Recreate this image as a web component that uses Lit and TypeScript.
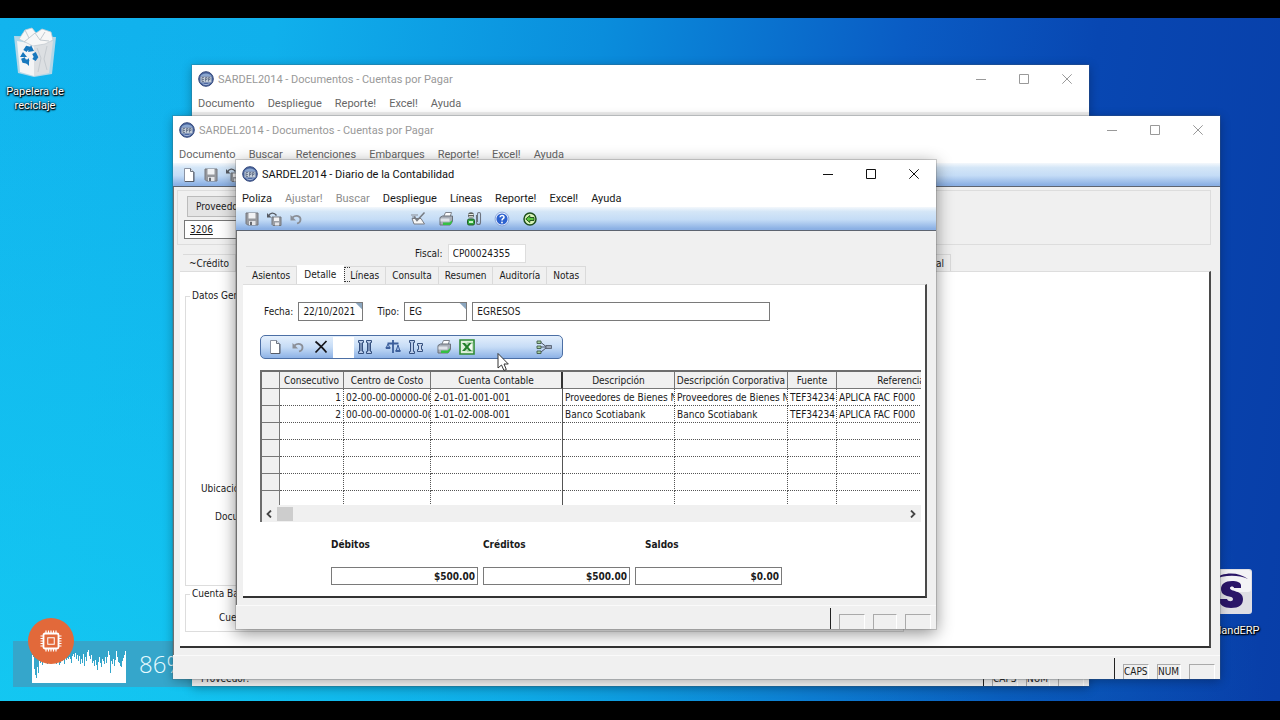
import { LitElement, html, css, svg } from "lit";
import { customElement, property } from "lit/decorators.js";

const ICONS: Record<string, unknown> = {
  page: svg`<path d="M3.5 1.5h6l3 3v10h-9z" fill="#fff" stroke="#8b93a3"/><path d="M9.500 1.500v3h3" fill="#dfe5ee" stroke="#6d7480"/><path d="M4 14.500h9V5" fill="none" stroke="#565c68"/>`,
  save: svg`<path d="M2 2h12v12H3.500L2 12.500z" fill="#97999e" stroke="#74777d"/><path d="M4.500 2h7v5.500h-7z" fill="#f1f2f4"/><path d="M5 10h6.500v4H5z" fill="#e4e5e8"/><path d="M6 10.800h2V14H6z" fill="#65686e"/>`,
  saveas: svg`<path d="M6 6h9v8.500H7L6 13.500z" fill="#9b9ea4" stroke="#73767c"/><path d="M8 6.500h5v3.500H8z" fill="#f3f3f5"/><path d="M9 11.500h4v3H9z" fill="#e3e4e8"/><path d="M2.500 5C4 1.500 8 1 10.500 4.500" fill="none" stroke="#555a62" stroke-width="1.400"/><path d="M1 2v4.500h4.500z" fill="#555a62"/>`,
  undo: svg`<path d="M4.500 6.500C8 3.500 13 5 12.500 9c-.2 2-1.500 3-3.500 3.500" fill="none" stroke="#8b8f97" stroke-width="1.800"/><path d="M2.500 4v5.500H8z" fill="#8b8f97"/>`,
  check: svg`<path d="M2 7.500h9l3.500 5.500H4z" fill="#f6f6f6" stroke="#787c84"/><path d="M1 4h7M2 6h4" stroke="#8b8f97"/><path d="M4 5.500l3 4L14.500 1.500" fill="none" stroke="#777b82" stroke-width="1.500"/>`,
  print: svg`<path d="M5.500 6L7.500 1.500h6L12 6z" fill="#fff" stroke="#7d838c"/><path d="M2 6.500L4.500 5h10v5.500L12 14H2z" fill="#a9afb8" stroke="#6a7079"/><path d="M2.500 7.500h9v3h-9z" fill="#dfe3e8"/><path d="M5 11.500h6.500L14 9.200v2.200L12 14H5z" fill="#35c043"/>`,
  attach: svg`<circle cx="5" cy="4.200" r="3" fill="#5a5f5c"/><path d="M2.500 3h5v1h-5zM3 5.200h4v1.300H3z" fill="#e6ece6"/><rect x="1.500" y="8" width="7" height="6" rx="1.500" fill="#2fa63c" stroke="#245b2a"/><path d="M3 10h4v2H3z" fill="#c9f1c9"/><path d="M10.500 4v7.500a2 2 0 0 0 4 0V3a1.500 1.500 0 0 0-3 0v8" fill="none" stroke="#6d7480" stroke-width="1.100"/>`,
  help: svg`<circle cx="8" cy="8" r="6.300" fill="#2c62cf" stroke="#e6efff" stroke-width="1.400"/><circle cx="8" cy="8" r="6.900" fill="none" stroke="#5b7ec2" stroke-width=".6"/><path d="M6 6.300C6.200 3.700 10.300 4 10 6.400 9.800 7.800 8 7.700 8 9.500" fill="none" stroke="#fff" stroke-width="1.500"/><circle cx="8" cy="11.500" r=".9" fill="#fff"/>`,
  back: svg`<circle cx="8" cy="8" r="6" fill="#d9f3b9" stroke="#1e4f1e" stroke-width="1.500"/><path d="M3.800 8l4-3.500v2H12v3H7.800v2z" fill="#5cc93f" stroke="#174a17" stroke-width=".9"/>`,
  del: svg`<path d="M2.500 2.500C6 5.500 10 9 13.500 13.500M13.500 2L2.500 13.500" fill="none" stroke="#15151a" stroke-width="1.700"/>`,
  cols: svg`<path d="M1.500 1.500h5v2h-1v9h1v2h-5v-2h1v-9h-1zM9.500 1.500h5v2h-1v9h1v2h-5v-2h1v-9h-1z" fill="#b9cbe8" stroke="#35507f"/><path d="M4 4v8M12 4v8" stroke="#35507f"/>`,
  scale: svg`<path d="M8 1v13M2.500 4.500h11" stroke="#3c5f9c" stroke-width="1.800"/><path d="M1 9l2-4 2 4zM11 12l2-6 2 6z" fill="#9db8e4" stroke="#3c5f9c"/><path d="M.8 9h4.500M10.500 12h5" stroke="#3c5f9c" stroke-width="1.800"/>`,
  colsmall: svg`<path d="M1.500 1.500h5v2h-1v9h1v2h-5v-2h1v-9h-1z" fill="#b9cbe8" stroke="#35507f"/><path d="M9.500 4.500h5v2h-1v4h1v2h-5v-2h1v-4h-1z" fill="#c9d6ec" stroke="#35507f"/>`,
  excel: svg`<path d="M1 1h14v14H1z" fill="#dff0dc" stroke="#2f8a35" stroke-width="1.600"/><path d="M8 4h6v8H8z" fill="#f4fbf2" stroke="#7cbb7c" stroke-width=".8"/><path d="M3 4h3l2 2.500L10 4h2.500L9.300 8l3.400 4H10L8 9.500 6 12H3l3.500-4z" fill="#23802b"/>`,
  tree: svg`<path d="M1 2h4v2.500H1zM1 7h4v2.500H1zM1 12h4v2.500H1z" fill="#a7cfa0" stroke="#3f5a48" stroke-width=".9"/><path d="M5 3.500l5 4M5 8h8M5 13l5-4" stroke="#4c5566" fill="none"/><path d="M10 6.500h5.500v3H10z" fill="#9aa6b8" stroke="#4c5566" stroke-width=".8"/>`,
};

const icon = (name: string) =>
  html`<svg viewBox="0 0 16 16" width="16" height="16" aria-hidden="true">${ICONS[name]}</svg>`;

@customElement("erp-window")
export class ErpWindow extends LitElement {
  @property() caption = "";
  @property() note = "";
  @property({ attribute: false }) menu: string[] = [];
  @property({ attribute: false }) disabledItems: string[] = [];
  @property({ attribute: false }) indicators: string[] = ["", "", ""];
  @property({ type: Boolean, reflect: true }) active = false;

  static styles = css`
    :host {
      display: flex;
      flex-direction: column;
      background: #f0f0f0;
      color: #1a1a1a;
      box-shadow: 0 0 0 1px rgba(80, 90, 100, 0.25), 0 2px 10px rgba(0, 0, 0, 0.3);
      font: 10px/16px "DejaVu Sans Condensed", "Noto Sans", sans-serif;
    }
    :host([active]) {
      box-shadow: 0 0 0 1px rgba(110, 110, 110, 0.3), 0 4px 16px rgba(0, 0, 0, 0.45);
    }
    button {
      font: inherit;
      color: inherit;
      background: none;
      border: 0;
      padding: 0;
    }
    svg {
      display: block;
    }
    .title,
    .menu {
      font: 11px/16px Roboto, "Noto Sans", sans-serif;
      white-space: nowrap;
      background: #fff;
    }
    .title {
      display: flex;
      align-items: center;
      height: 28px;
      padding: 0 1px 0 6px;
      gap: 4px;
      color: #999;
    }
    :host([active]) .title {
      color: #111;
    }
    .caption {
      flex: 1;
      padding-top: 2px;
    }
    .controls {
      display: flex;
    }
    .controls button {
      display: grid;
      place-items: center;
      width: 43px;
      height: 28px;
    }
    .menu {
      box-sizing: border-box;
      display: flex;
      gap: 13px;
      height: 19px;
      align-items: center;
      padding: 2px 0 0 6px;
      color: #666;
    }
    :host([active]) .menu {
      color: #1a1a1a;
    }
    .menu button:disabled {
      color: #8c8c8c;
    }
    .body {
      flex: 1;
      min-height: 0;
      display: flex;
      flex-direction: column;
    }
    .status {
      display: flex;
      justify-content: flex-end;
      align-items: flex-end;
      height: 23px;
      border-top: 1px solid #fafafa;
      padding: 0 5px 0 9px;
      gap: 8px;
      overflow: hidden;
    }
    .note {
      flex: 1;
      line-height: 15px;
    }
    .rule {
      width: 1px;
      align-self: stretch;
      margin-top: 2px;
      background: #222;
    }
    .cell {
      box-sizing: border-box;
      width: 26px;
      height: 15px;
      line-height: 14px;
      border-top: 1px solid #aaa;
      border-left: 1px solid #aaa;
      border-right: 1px solid #fff;
      white-space: nowrap;
    }
    .cell.narrow {
      width: 24px;
    }
  `;

  render() {
    return html`
      <header class="title">
        <svg width="16" height="16" viewBox="0 0 16 16" aria-hidden="true">
          <circle cx="8" cy="8" r="7.300" fill="#4b669f" stroke="#33477a" />
          <path d="M2.500 5C4.500 1.500 11.500 1.500 13.500 5z" fill="#8aa6cf" />
          <path d="M2.500 5.500h11v6h-11z" fill="#c3cdd8" />
          <path d="M6 6.500H4v4h2M4 8.500h2M7.500 10.500v-4H9v2H7.500M10.500 10.500v-4H12v2h-1.500" stroke="#5d6b84" fill="none" stroke-width=".8" />
          <path d="M4.500 12.500c2 1.500 5 1.500 7 0" stroke="#a9bbdb" fill="none" />
        </svg>
        <span class="caption">${this.caption}</span>
        <div class="controls">
          <button aria-label="Minimizar">
            <svg width="10" height="10" viewBox="0 0 10 10" stroke="currentColor"><path d="M0 5.500h10" /></svg>
          </button>
          <button aria-label="Maximizar">
            <svg width="10" height="10" viewBox="0 0 10 10" stroke="currentColor" fill="none"><path d="M.5.5h9v9h-9z" /></svg>
          </button>
          <button aria-label="Cerrar">
            <svg width="10" height="10" viewBox="0 0 10 10" stroke="currentColor"><path d="M.3.3l9.400 9.400M9.700.3L.3 9.700" /></svg>
          </button>
        </div>
      </header>
      <nav class="menu">
        ${this.menu.map((m) => html`<button ?disabled=${this.disabledItems.includes(m)}>${m}</button>`)}
      </nav>
      <div class="body"><slot></slot></div>
      <footer class="status">
        <span class="note">${this.note}</span>
        <span class="rule"></span>
        ${this.indicators.map((t, i) => html`<span class="cell ${i === 1 ? "narrow" : ""}">${t}</span>`)}
      </footer>
    `;
  }
}

const COLUMNS = ["", "Consecutivo", "Centro de Costo", "Cuenta Contable", "Descripción", "Descripción Corporativa", "Fuente", "Referencia"];
const ROWS = [
  ["", "1", "02-00-00-00000-00", "2-01-01-001-001", "Proveedores de Bienes N", "Proveedores de Bienes N", "TEF34234", "APLICA FAC F000"],
  ["", "2", "00-00-00-00000-00", "1-01-02-008-001", "Banco Scotiabank", "Banco Scotiabank", "TEF34234", "APLICA FAC F000"],
  ...Array.from({ length: 5 }, () => Array(8).fill("")),
];
const LOAD = [
  28, 26, 14, 8, 5, 16, 10, 22, 20, 23, 18, 25, 21, 24, 22, 19, 23, 20, 24, 21, 25, 22, 20, 23, 19, 24, 26, 18, 20, 24, 22,
  26, 19, 27, 23, 25, 24, 26, 24, 20, 27, 29, 26, 30, 24, 28, 22, 27, 19, 24, 20, 29, 17, 26, 22, 31, 33, 27, 24, 28, 20, 22,
  17, 23, 18, 13, 21, 26, 20, 16, 24, 22, 19, 26, 20, 26, 32, 28, 10, 22, 19, 24, 17, 23, 32, 26, 21, 20, 17, 16, 22, 25, 28, 32,
];

@customElement("app-root")
export class AppRoot extends LitElement {
  static styles = css`
    :host {
      display: flex;
      flex-direction: column;
      position: relative;
      height: 100vh;
      overflow: hidden;
      font: 10px/16px "DejaVu Sans Condensed", "Noto Sans", sans-serif;
      color: #1a1a1a;
    }
    button,
    input {
      box-sizing: border-box;
      font: inherit;
      color: inherit;
      margin: 0;
      padding: 0;
      border: 0;
      background: none;
      border-radius: 0;
      min-width: 0;
    }
    svg {
      display: block;
    }
    .letterbox {
      height: 18px;
      background: #000;
    }
    .letterbox.bottom {
      height: 19px;
    }
    .desktop {
      flex: 1;
      background: linear-gradient(98deg, #12b4ee 0%, #10b0ec 20%, #0a8ddc 44%, #0a5cc4 66%, #0847b2 80%, #083ea8 100%);
    }
    .glow {
      height: 100%;
      background: radial-gradient(ellipse at 0% 100%, rgba(20, 204, 242, 0.8), rgba(20, 204, 242, 0) 70%);
    }
    .shortcut {
      position: absolute;
      display: flex;
      flex-direction: column;
      align-items: center;
      width: 70px;
      text-align: center;
      color: #fff;
      font: 11px/14px Roboto, "Noto Sans", sans-serif;
      text-decoration: none;
      text-shadow: 0 0 2px #000, 1px 1px 1px #000, 0 1px 2px #000;
    }
    .bin {
      left: 0;
      top: 26px;
      gap: 5px;
    }
    .erp {
      right: 16px;
      top: 568px;
      gap: 8px;
    }
    .cpu {
      position: absolute;
      left: 13px;
      bottom: 33px;
      display: flex;
      align-items: flex-end;
      width: 178px;
      height: 46px;
      background: #35a6cb;
      color: #e8fbff;
    }
    .graph {
      display: flex;
      align-items: flex-end;
      width: 94px;
      margin: 0 13px 4px 19px;
    }
    .bar {
      flex: 1;
      background: #fff;
    }
    .percent {
      font: 300 24px/46px "Open Sans", sans-serif;
    }
    .chip {
      position: absolute;
      left: 15px;
      top: -23px;
      display: grid;
      place-items: center;
      width: 46px;
      height: 46px;
      border-radius: 50%;
      background: #e2693a;
    }
    erp-window {
      position: absolute;
    }
    .w1 {
      left: 192px;
      right: 191px;
      top: 65px;
      bottom: 34px;
    }
    .w2 {
      left: 173px;
      right: 60px;
      top: 116px;
      bottom: 41px;
    }
    .w3 {
      left: 236px;
      right: 344px;
      top: 160px;
      bottom: 91px;
    }
    .toolbar {
      display: flex;
      align-items: center;
      flex: none;
      height: 23px;
      padding-left: 8px;
      gap: 6px;
      background: linear-gradient(#f4f8fc 0, #d4e6f7 20%, #c4dcf6 55%, #8bb0e4 95%);
      border-bottom: 1px solid #5d6470;
    }
    .tool {
      display: grid;
      place-items: center;
      width: 16px;
      height: 20px;
    }
    .group {
      display: flex;
      gap: 12px;
      margin-left: 100px;
    }
    .sheet {
      flex: 1;
      min-height: 0;
      display: flex;
      flex-direction: column;
      padding: 0 9px 7px 6px;
      border-left: 1px solid #707070;
    }
    .panel {
      flex: 1;
      min-height: 0;
      background: #fff;
      border-right: 2px solid #4a4a4a;
      border-bottom: 2px solid #333;
      border-top: 1px solid #ddd;
    }
    .tabs {
      display: flex;
      align-items: flex-end;
    }
    .tab {
      height: 18px;
      padding: 0 6px;
      background: #f0f0f0;
      border: 1px solid #dadada;
      border-left: 0;
      border-bottom: 0;
    }
    .tab.on {
      height: 20px;
      padding: 0 7px 1px;
      background: #fff;
      border-color: #fff;
      margin-bottom: -1px;
    }
    .tabs.main {
      padding: 2px 0 0 3px;
    }
    .main .tab:not(.on) {
      padding-top: 1px;
    }
    .fiscal {
      display: flex;
      align-items: center;
      gap: 5px;
      padding: 13px 0 0 172px;
    }
    .field {
      height: 19px;
      padding: 0 4px;
      border: 1px solid #7a7a7a;
      background: #fff;
    }
    .field.flat {
      width: 78px;
      border-color: #ddd;
    }
    .field.pick {
      background: linear-gradient(225deg, #8ba6bf 4px, #fff 5px);
      padding-right: 2px;
    }
    .main.panel {
      padding: 17px 4px 0 17px;
    }
    .row {
      display: flex;
      align-items: center;
      padding-left: 4px;
      gap: 5px;
    }
    .date {
      width: 65px;
    }
    .kind {
      width: 63px;
    }
    .name {
      width: 298px;
    }
    .row .second {
      margin-left: 9px;
    }
    .strip {
      display: flex;
      align-items: center;
      box-sizing: border-box;
      width: 303px;
      height: 24px;
      margin: 14px 0 11px;
      padding: 0 10px 0 6px;
      gap: 7px;
      border: 1px solid #4c6fa5;
      border-radius: 5px;
      background: linear-gradient(#e4effc, #c6dcf6 50%, #8db2e6);
    }
    .blank {
      width: 21px;
      height: 21px;
      background: #fff;
      margin: 0 -4px 0 -3px;
    }
    .strip .mid {
      margin-left: 5px;
    }
    .strip .last {
      margin-left: auto;
    }
    .grid {
      overflow: hidden;
      border-left: 2px solid #6d6d6d;
      border-top: 2px solid #6d6d6d;
      height: 133px;
    }
    table {
      table-layout: fixed;
      width: 704px;
      border-collapse: separate;
      border-spacing: 0;
    }
    th,
    td {
      box-sizing: border-box;
      height: 17px;
      padding: 0 2px;
      line-height: 15px;
      font-weight: 400;
      text-align: left;
      white-space: nowrap;
      overflow: hidden;
      border-right: 1px dotted #555;
      border-bottom: 1px dotted #555;
    }
    th {
      padding: 0;
      text-align: center;
      background: #f0f0f0;
      border-right: 1px solid #777;
      border-bottom: 1px solid #777;
    }
    td:first-child {
      background: #f0f0f0;
      border-right: 1px solid #777;
      border-bottom: 1px solid #777;
    }
    td:nth-child(2) {
      text-align: right;
    }
    th:nth-child(4) {
      border-right: 2px solid #333;
    }
    td:nth-child(4) {
      padding-left: 3px;
      border-right: 1px solid #555;
    }
    .scroll {
      display: flex;
      align-items: center;
      height: 17px;
      padding: 0 4px 0 3px;
      gap: 4px;
      background: #f0f0f0;
      border-left: 2px solid #6d6d6d;
    }
    .thumb {
      width: 16px;
      height: 14px;
      background: #cdcdcd;
    }
    .scroll .right {
      margin-left: auto;
    }
    .totals {
      display: flex;
      gap: 5px;
      padding: 15px 0 0 71px;
      font-weight: 700;
    }
    .total {
      display: flex;
      flex-direction: column;
      gap: 14px;
      width: 147px;
    }
    .total label {
      height: 16px;
    }
    .total.inset label {
      padding-left: 10px;
    }
    .total input {
      width: 100%;
      height: 18px;
      padding: 0 2px;
      text-align: right;
      border: 1px solid #7a7a7a;
    }
    .vendor {
      display: flex;
      flex-direction: column;
      align-items: flex-start;
      gap: 3px;
      height: 55px;
      box-sizing: border-box;
      margin: 3px 0 9px -3px;
      padding: 5px 6px 0;
      border: 1px solid #ddd;
    }
    .vendor button {
      height: 21px;
      width: 90px;
      margin-left: 3px;
      padding-left: 8px;
      text-align: left;
      border: 1px solid #bbb;
      background: #e4e4e4;
    }
    .vendor input {
      width: 120px;
      height: 19px;
      padding: 0 5px;
      border: 1px solid #777;
      background: #fff;
      text-decoration: underline;
    }
    .docs {
      justify-content: space-between;
      padding: 0 260px 0 3px;
    }
    .docs .tab {
      height: 17px;
      padding-top: 1px;
    }
    .back.panel {
      padding: 16px 0 0 5px;
    }
    fieldset {
      box-sizing: border-box;
      width: 719px;
      margin: 0;
      padding: 0 0 0 10px;
      border: 1px solid #ddd;
      display: flex;
      flex-direction: column;
      gap: 12px;
    }
    legend {
      padding: 0 2px;
      margin-left: -6px;
    }
    .general {
      height: 298px;
      padding-top: 177px;
    }
    .bank {
      height: 46px;
      padding-top: 8px;
    }
    .general label {
      padding-left: 5px;
    }
    .general label + label {
      padding-left: 19px;
    }
    .bank label {
      padding-left: 23px;
    }
    .pointer {
      position: absolute;
      left: 496px;
      top: 352px;
    }
    .caret {
      position: absolute;
      left: 344px;
      top: 267px;
      width: 5px;
      height: 13px;
      border: 1px dotted #333;
      border-right: 0;
    }
  `;

  private tool(name: string, label: string, cls = "") {
    return html`<button class="tool ${cls}" aria-label=${label}>${icon(name)}</button>`;
  }

  private total(id: string, label: string, value: string, cls = "") {
    return html`<div class="total ${cls}"><label for=${id}>${label}</label><input id=${id} .value=${value} /></div>`;
  }

  private desktop() {
    return html`
      <div class="letterbox"></div>
      <div class="desktop"><div class="glow"></div></div>
      <div class="letterbox bottom"></div>
      <a class="shortcut bin" href="#bin">
        <svg width="48" height="54" viewBox="0 0 48 54">
          <path d="M3 10l42 1-4 37-18 3-16-4z" fill="#cfdde6" opacity=".85" />
          <path d="M6 15l17 3v32L9 46z" fill="#f4f5f6" />
          <path d="M23 18l19-3-4 32-15 3z" fill="#dcdfe2" />
          <path d="M8 13l6-9 7-2 4 5 6-4 9 3 2 8-8 4-12 2z" fill="#f7f7f7" stroke="#c5ccd2" stroke-width=".8" />
          <path d="M14 4l4 8 6-5 5 7 5-8M18 12l-5 4M29 14l9 1" fill="none" stroke="#c2cad0" />
          <path d="M26 22l4 10-3 14M36 20l-3 13 3 11" fill="none" stroke="#c6cbd0" />
          <g fill="none" stroke="#1878bd" stroke-width="4">
            <path d="M14 25l2-3 4 1" /><path d="M23 27l2 4-2 3" /><path d="M18 36l-5-1-1-3" />
          </g>
          <path d="M20 19l3 6-6 1zM18 32v8l-4-4zM9 31l3-5 4 5z" fill="#1878bd" />
        </svg>
        <span>Papelera de reciclaje</span>
      </a>
      <a class="shortcut erp" href="#erp">
        <svg width="48" height="48" viewBox="0 0 48 48">
          <rect x="1" y="1" width="46" height="45" rx="3" fill="#dedee4" />
          <rect x="2" y="2" width="44" height="22" rx="3" fill="#f3f3f6" />
          <path d="M8 12C18 3 34 4 43 11 32 6 18 7 8 12z" fill="#2a1668" />
          <path d="M36 17c-1-3-4-4-9-4-7 0-11 3-11 8 0 9 12 6 12 10 0 3-5 3-6 0h-8c0 6 5 9 12 9 8 0 12-3 12-9 0-9-13-7-13-11 0-2 4-2 4 0h7z" fill="#2a1668" />
        </svg>
        <span>SoftlandERP</span>
      </a>
      <section class="cpu">
        <div class="graph">${LOAD.map((h) => html`<div class="bar" style="height:${h}px"></div>`)}</div>
        <span class="percent">86%</span>
        <div class="chip">
          <svg width="24" height="24" viewBox="0 0 24 24" fill="none" stroke="#fff">
            <rect x="4.500" y="4.500" width="15" height="15" rx="1.500" stroke-width="1.800" />
            <rect x="8.750" y="8.750" width="6.500" height="6.500" />
            <path d="M7 4V1.500M9.500 4V1.500M12 4V1.500M14.500 4V1.500M17 4V1.500M7 20v2.500M9.500 20v2.500M12 20v2.500M14.500 20v2.500M17 20v2.500M4 7H1.500M4 9.500H1.500M4 12H1.500M4 14.500H1.500M4 17H1.500M20 7h2.500M20 9.500h2.500M20 12h2.500M20 14.500h2.500M20 17h2.500" stroke-width="1.200" />
          </svg>
        </div>
      </section>
    `;
  }

  render() {
    const payables = "SARDEL2014 - Documentos - Cuentas por Pagar";
    return html`
      ${this.desktop()}
      <erp-window
        class="w1"
        caption=${payables}
        note="Proveedor:"
        .menu=${["Documento", "Despliegue", "Reporte!", "Excel!", "Ayuda"]}
        .indicators=${["CAPS", "NUM", ""]}
      ></erp-window>
      <erp-window
        class="w2"
        caption=${payables}
        .menu=${["Documento", "Buscar", "Retenciones", "Embarques", "Reporte!", "Excel!", "Ayuda"]}
        .indicators=${["CAPS", "NUM", ""]}
      >
        <div class="toolbar">
          ${this.tool("page", "Nuevo")} ${this.tool("save", "Guardar")} ${this.tool("saveas", "Guardar como")}
        </div>
        <div class="sheet">
          <div class="vendor">
            <button>Proveedor</button>
            <input aria-label="Proveedor" .value=${"3206"} />
          </div>
          <div class="tabs docs">
            <button class="tab">~Crédito</button>
            <button class="tab">Adicional</button>
          </div>
          <div class="back panel">
            <fieldset class="general">
              <legend>Datos Generales</legend>
              <label>Ubicación:</label>
              <label>Documento:</label>
            </fieldset>
            <fieldset class="bank">
              <legend>Cuenta Bancaria</legend>
              <label>Cuenta:</label>
            </fieldset>
          </div>
        </div>
      </erp-window>
      <erp-window
        class="w3"
        active
        caption="SARDEL2014 - Diario de la Contabilidad"
        .menu=${["Poliza", "Ajustar!", "Buscar", "Despliegue", "Líneas", "Reporte!", "Excel!", "Ayuda"]}
        .disabledItems=${["Ajustar!", "Buscar"]}
      >
        <div class="toolbar">
          ${this.tool("save", "Guardar")} ${this.tool("saveas", "Guardar como")} ${this.tool("undo", "Deshacer")}
          <div class="group">
            ${this.tool("check", "Aprobar")} ${this.tool("print", "Imprimir")} ${this.tool("attach", "Adjuntar")}
            ${this.tool("help", "Ayuda")} ${this.tool("back", "Regresar")}
          </div>
        </div>
        <div class="sheet">
          <div class="fiscal">
            <label for="fiscal">Fiscal:</label>
            <input id="fiscal" class="field flat" .value=${"CP00024355"} />
          </div>
          <div class="tabs main" role="tablist">
            ${["Asientos", "Detalle", "Líneas", "Consulta", "Resumen", "Auditoría", "Notas"].map(
              (t) => html`<button role="tab" class="tab ${t === "Detalle" ? "on" : ""}">${t}</button>`
            )}
          </div>
          <div class="main panel">
            <div class="row">
              <label for="fecha">Fecha:</label>
              <input id="fecha" class="field pick date" .value=${"22/10/2021"} />
              <label for="tipo" class="second">Tipo:</label>
              <input id="tipo" class="field pick kind" .value=${"EG"} />
              <input aria-label="Descripción del tipo" class="field name" .value=${"EGRESOS"} />
            </div>
            <div class="strip">
              ${this.tool("page", "Nueva línea")} ${this.tool("undo", "Deshacer")} ${this.tool("del", "Eliminar")}
              <span class="blank"></span>
              ${this.tool("cols", "Columnas")} ${this.tool("scale", "Balancear", "mid")}
              ${this.tool("colsmall", "Detalle")} ${this.tool("print", "Imprimir", "mid")}
              ${this.tool("excel", "Excel")} ${this.tool("tree", "Distribuir", "last")}
            </div>
            <div class="grid">
              <table>
                <colgroup>
                  ${[18, 64, 87, 132, 112, 113, 49, 129].map((w) => html`<col style="width:${w}px" />`)}
                </colgroup>
                <thead>
                  <tr>${COLUMNS.map((c) => html`<th>${c}</th>`)}</tr>
                </thead>
                <tbody>
                  ${ROWS.map((r) => html`<tr>${r.map((c) => html`<td>${c}</td>`)}</tr>`)}
                </tbody>
              </table>
            </div>
            <div class="scroll">
              <svg width="8" height="8" viewBox="0 0 8 8" fill="none" stroke="#444" stroke-width="1.800"><path d="M6 .5L2.500 4 6 7.500" /></svg>
              <span class="thumb"></span>
              <svg class="right" width="8" height="8" viewBox="0 0 8 8" fill="none" stroke="#444" stroke-width="1.800"><path d="M2 .5L5.500 4 2 7.500" /></svg>
            </div>
            <div class="totals">
              ${this.total("debitos", "Débitos", "$500.00")} ${this.total("creditos", "Créditos", "$500.00")}
              ${this.total("saldos", "Saldos", "$0.00", "inset")}
            </div>
          </div>
        </div>
      </erp-window>
      <span class="caret"></span>
      <svg class="pointer" width="13" height="20" viewBox="0 0 13 20">
        <path d="M2 1.500v14.500l3.500-3 2.500 5.500 2.300-1L8 12h4.300z" fill="#fff" stroke="#333" />
      </svg>
    `;
  }
}
